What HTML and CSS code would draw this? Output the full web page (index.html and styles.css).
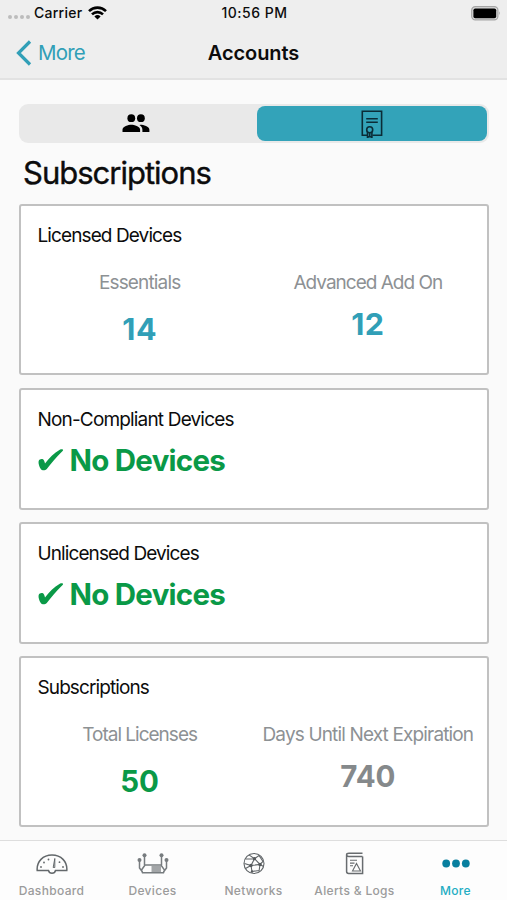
FILE: index.html
```html
<!DOCTYPE html>
<html lang="en">
<head>
<meta charset="utf-8">
<title>Accounts</title>
<link rel="stylesheet" href="styles.css">
</head>
<body>
<div class="app">
  <header class="top">
    <div class="status">
      <div class="status-left">
        <span class="signal"><i></i><i></i><i></i><i></i></span>
        <span class="carrier">Carrier</span>
        <svg class="wifi" width="19" height="14" viewBox="0 0 19 14"><g fill="none" stroke="#000" stroke-width="2.6"><path d="M1 5.1a12.2 12.2 0 0 1 17 0"/><path d="M4 8.4a7.9 7.9 0 0 1 11 0"/></g><path d="M9.5 13.6 6.4 10.5a4.5 4.5 0 0 1 6.2 0z"/></svg>
      </div>
      <span class="clock">10:56 PM</span>
      <svg class="battery" width="30" height="15" viewBox="0 0 30 15"><rect x=".7" y=".7" width="26.2" height="13.2" rx="3.6" fill="#ddd" stroke="#a5a5a5" stroke-width="1.2"/><rect x="2.4" y="2.4" width="22.8" height="9.8" rx="1.8"/><path d="M28.2 5.3q1.5 2 0 4z" fill="#999"/></svg>
    </div>
    <nav class="nav">
      <a class="back"><svg width="16" height="26" viewBox="0 0 16 26"><path d="M14 1.5 2.500 13 14 24.5" fill="none" stroke="#319fb7" stroke-width="3.2"/></svg><span>More</span></a>
      <h1>Accounts</h1>
      <span></span>
    </nav>
  </header>

  <main>
    <div class="segments">
      <div class="segment people"><svg width="28" height="19" viewBox="0 0 28 19"><circle cx="9.3" cy="4.2" r="3.9"/><circle cx="18.9" cy="4.2" r="3.9"/><path d="M.5 18v-2.3c0-3.200 5.900-4.900 8.800-4.900s8.800 1.700 8.800 4.900V18z"/><path d="M18.400 10.800c3 0 9 1.700 9 4.900V18h-7v-2.300c0-2.200-1.200-3.700-2.900-4.800z"/></svg></div>
      <div class="segment selected"><svg width="22" height="28" viewBox="0 0 22 28"><g fill="none" stroke="#0b2c37" stroke-width="1.6"><path d="M6 25.200H1.300V1.300h19.300v23.900H11.500M5.200 8.800h11.600M5.200 12.300h11.600"/><circle cx="8.700" cy="19.800" r="3"/><path d="M6.500 21.800v5.700l2.200-1.500 2.200 1.500v-5.700M8.700 22.500V26"/></g></svg></div>
    </div>
    <h2>Subscriptions</h2>

    <section class="card tall">
      <h3>Licensed Devices</h3>
      <div class="stats">
        <div class="stat"><p>Essentials</p><strong class="teal low wide">14</strong></div>
        <div class="stat"><p class="tight">Advanced Add On</p><strong class="teal wide">12</strong></div>
      </div>
    </section>
    <section class="card">
      <h3 class="loose">Non-Compliant Devices</h3>
      <div class="ok"><svg width="27" height="26" viewBox="0 0 27 26"><path d="M.7 14c.8-2.300 4.200-2.700 5.300-.6.600 1.100.7 2 1 3C11.200 10.800 16 6 21.800 2.700c1.200-.6 3.300-.7 3.300.3 0 .7-.8 1.300-1.500 2C17.800 10.500 13.300 16.300 8.800 22c-1.200 1.600-4.800 1.900-5.800.3C1.800 20.700 0 16.500.7 14z"/></svg><span>No Devices</span></div>
    </section>
    <section class="card">
      <h3>Unlicensed Devices</h3>
      <div class="ok"><svg width="27" height="26" viewBox="0 0 27 26"><path d="M.7 14c.8-2.300 4.200-2.700 5.300-.6.600 1.100.7 2 1 3C11.200 10.800 16 6 21.800 2.700c1.200-.6 3.300-.7 3.300.3 0 .7-.8 1.300-1.500 2C17.800 10.500 13.300 16.300 8.800 22c-1.200 1.600-4.800 1.900-5.800.3C1.800 20.700 0 16.500.7 14z"/></svg><span>No Devices</span></div>
    </section>
    <section class="card tall">
      <h3>Subscriptions</h3>
      <div class="stats">
        <div class="stat"><p class="tight">Total Licenses</p><strong class="green low">50</strong></div>
        <div class="stat"><p>Days Until Next Expiration</p><strong class="gray">740</strong></div>
      </div>
    </section>
  </main>

  <footer class="tabs">
    <div class="tab">
      <svg width="32" height="24" viewBox="0 0 32 24"><g fill="none" stroke="#63686b" stroke-width="1.500"><path d="M1.200 18.500C.5 9.500 7 3 16 3s15.500 6.500 14.800 15.500H19.500a3.600 3.600 0 0 1-7 0z"/><path d="M17.200 15.500 18.800 6.500v9z" stroke-width="1"/></g><g fill="#63686b"><circle cx="5" cy="15" r=".9"/><circle cx="8" cy="10.500" r=".9"/><circle cx="12.500" cy="7.500" r=".9"/><circle cx="23.500" cy="10.200" r=".9"/><circle cx="27" cy="15" r=".9"/></g></svg>
      <span>Dashboard</span>
    </div>
    <div class="tab">
      <svg width="32" height="24" viewBox="0 0 32 24"><g fill="none" stroke="#777c7f" stroke-width="1.500"><path d="M4.500 18 8 13h16l3.500 5-1 2.700h-21zM2.500 9v7l3 4M29.500 9v7l-3 4M7.500 4.500V13M24.500 4.500V13"/></g><g fill="#777c7f"><circle cx="2.500" cy="8" r="2"/><circle cx="29.500" cy="8" r="2"/><circle cx="7.500" cy="3.300" r="2"/><circle cx="24.500" cy="3.300" r="2"/></g><path d="M14.500 14H24v6h-9.500z" fill="#a3a6a8"/></svg>
      <span>Devices</span>
    </div>
    <div class="tab">
      <svg width="24" height="24" viewBox="0 0 24 24"><g fill="none" stroke="#606568" stroke-width="1.100"><circle cx="12" cy="11.500" r="10"/><path d="M3.500 7 12.500 6.700 17 3.500l4 6-3 3-5.500-5.800L9 13.500l-6.500-2M9 13.500l9-1-1 7M9 13.500l1 6 7-1M3.500 16.500 9 13.500M12.500 6.700 7 2.900M21.500 14.500 18 12.500"/></g><g fill="#55595c"><circle cx="12.500" cy="6.700" r="1.600"/><circle cx="9" cy="13.500" r="1.700"/><circle cx="18" cy="12.500" r="1.700"/><circle cx="10" cy="19.500" r="1.200"/></g></svg>
      <span>Networks</span>
    </div>
    <div class="tab">
      <svg width="20" height="24" viewBox="0 0 20 24"><g fill="none" stroke="#686c6f" stroke-width="1.500"><path d="M17.500 4.500H4C.8 4.500.8 1.200 4 1.200h13.500M1.600 3V19.500q0 1.900 2 1.900h14V4.500"/><path d="M5 8.300h7M5 11.100h4.500M5 13.700h3M7.500 19l4-7.500 4 7.500z" stroke-width="1.100"/></g></svg>
      <span>Alerts &amp; Logs</span>
    </div>
    <div class="tab active">
      <svg width="30" height="24" viewBox="0 0 30 24"><g fill="#087f9f"><circle cx="5.200" cy="11.500" r="3.900"/><circle cx="15" cy="11.500" r="3.900"/><circle cx="24.800" cy="11.500" r="3.900"/></g></svg>
      <span>More</span>
    </div>
  </footer>
</div>
</body>
</html>
```
FILE: styles.css
```css
* { box-sizing: border-box; }
body { margin: 0; background: #fafafa; color: #0c0c0c; font-family: Inter, "Liberation Sans", sans-serif; }
h1, h2, h3, p { margin: 0; font-weight: 400; white-space: nowrap; }
svg { display: block; flex: none; }
.app { width: 507px; height: 900px; display: flex; flex-direction: column; overflow: hidden; }

.top { height: 80px; flex: none; background: #eee; border-bottom: 2px solid #e2e2e2; }
.status { height: 26px; display: grid; grid-template-columns: 1fr auto 1fr; align-items: center; padding: 0 6px 0 8px; font-size: 14px; font-weight: 500; line-height: 26px; letter-spacing: .25px; }
.clock { letter-spacing: .5px; }
.status-left { display: flex; align-items: center; }
.signal { display: flex; gap: 2px; width: 26px; padding-top: 8px; }
.signal i { width: 4px; height: 4px; border-radius: 50%; background: #bcbcbc; }
.wifi { margin-left: 6px; }
.battery { justify-self: end; }
.nav { height: 53px; display: grid; grid-template-columns: 1fr auto 1fr; align-items: center; padding: 0 16px; }
.back { display: flex; align-items: center; gap: 6px; color: #319fb7; font-size: 20.500px; letter-spacing: -.8px; }
.nav h1 { font-size: 20px; font-weight: 600; letter-spacing: -.1px; }

main { flex: 1; padding: 24px 18.500px 0 19px; min-height: 0; }
.segments { height: 39px; border-radius: 9px; background: #e9e9e9; padding: 2px 2px 2px 2px; display: grid; grid-template-columns: 1fr 230px; }
.segment { display: flex; align-items: center; justify-content: center; }
.people { padding-right: 5px; }
.selected { background: #33a3b9; border-radius: 8px; }
h2 { font-size: 31px; line-height: 40px; margin: 10px 0 11px 4px; letter-spacing: -1px; -webkit-text-stroke: .4px; }
.card { height: 122px; margin-bottom: 12px; padding: 18px 2.500px 0; background: #fff; border: 2px solid #c1c1c1; border-radius: 3px; }
.card.tall { height: 171px; margin-bottom: 13px; }
h3 { font-size: 19px; line-height: 24px; padding-left: 14px; letter-spacing: -.9px; }
h3.loose { letter-spacing: -.83px; }
.stats { display: grid; grid-template-columns: repeat(2, minmax(0, 1fr)); margin: 23px 2px 0 2px; }
.stat { display: flex; flex-direction: column; align-items: center; }
.stat p { font-size: 19px; line-height: 24px; color: #8d9194; letter-spacing: -.85px; }
.stat p.tight { letter-spacing: -1px; }
.stat strong { font-size: 29.500px; line-height: 36px; font-weight: 700; margin-top: 11px; }
.stat .low { margin-top: 16px; }
.stat .wide { font-size: 30.500px; letter-spacing: .5px; }
.teal { color: #319fb7; }
.green { color: #0a9947; }
.gray { color: #85898b; }
.ok { display: flex; align-items: center; gap: 5px; margin-top: 10px; padding-left: 14px; font-size: 29.500px; line-height: 36px; font-weight: 700; letter-spacing: -.75px; color: #0a9947; fill: #0a9947; }

.tabs { height: 60px; flex: none; background: #fdfdfd; border-top: 1px solid #dedede; display: grid; grid-template-columns: repeat(5, 1fr); padding: 11px 1px 0; }
.tab { display: flex; flex-direction: column; align-items: center; font-size: 12px; font-weight: 500; line-height: 16px; letter-spacing: .33px; color: #9b9b9b; white-space: nowrap; }
.tab span { margin-top: 7px; }
.active { color: #24adc3; }
```
